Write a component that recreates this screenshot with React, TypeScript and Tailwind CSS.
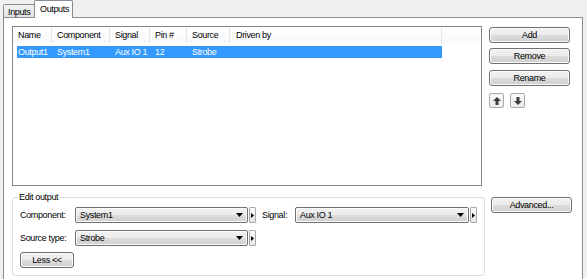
import React from "react";

const btnBg =
  "bg-[linear-gradient(#f2f2f2,#ebebeb_50%,#dddddd_51%,#cfcfcf)] shadow-[inset_0_0_0_1px_#fbfbfb]";

function Btn({
  children,
  className = "",
  w = "w-[81px]",
}: {
  children: React.ReactNode;
  className?: string;
  w?: string;
}) {
  return (
    <div
      className={`h-[16px] ${w} rounded-[3px] border border-[#707070] ${btnBg} flex items-center justify-center text-black ${className}`}
    >
      {children}
    </div>
  );
}

function ArrowBtn({ down = false }: { down?: boolean }) {
  return (
    <div className="h-[15px] w-[15px] rounded-[2px] border border-[#a9a9a9] bg-[linear-gradient(#fafafa,#ececec)] flex items-center justify-center">
      <svg width="8" height="8" viewBox="0 0 8 8" className={down ? "rotate-180" : ""}>
        <path d="M4 0 L8 4 H5.5 V8 H2.5 V4 H0 Z" fill="#3c3c3c" />
      </svg>
    </div>
  );
}

function Combo({ value, w }: { value: string; w: string }) {
  return (
    <div className="flex items-center">
      <div
        className={`${w} h-[16px] rounded-[2px] border border-[#707070] ${btnBg} flex items-center pl-[4px] pr-[4px]`}
      >
        <span className="flex-1">{value}</span>
        <svg width="7" height="4" viewBox="0 0 7 4">
          <path d="M0 0 H7 L3.5 4 Z" fill="#000" />
        </svg>
      </div>
      <div className="ml-[1px] w-[7px] h-[16px] rounded-[1px] border border-[#a9a9a9] bg-[linear-gradient(#fafafa,#e6e6e6)] flex items-center justify-center">
        <svg width="3" height="5" viewBox="0 0 3 5">
          <path d="M0 0 L3 2.5 L0 5 Z" fill="#000" />
        </svg>
      </div>
    </div>
  );
}

const cols = [
  { name: "Name", w: "w-[39px] pl-[5px]", rw: "w-[35px] pl-[1px]" },
  { name: "Component", w: "w-[58px] pl-[5px]", rw: "w-[58px] pl-[5px]" },
  { name: "Signal", w: "w-[40px] pl-[5px]", rw: "w-[40px] pl-[5px]" },
  { name: "Pin #", w: "w-[37px] pl-[5px]", rw: "w-[37px] pl-[5px]" },
  { name: "Source", w: "w-[43px] pl-[5px]", rw: "w-[43px] pl-[5px]" },
  { name: "Driven by", w: "w-[212px] pl-[6px]", rw: "w-[212px] pl-[6px]" },
];

const row = ["Output1", "System1", "Aux IO 1", "12", "Strobe", ""];

export default function App() {
  return (
    <div className="w-[587px] h-[279px] overflow-hidden bg-[#f0f0f0] text-[9px] tracking-[-0.35px] leading-[12px] text-black font-['Liberation_Sans',Arial,sans-serif]">
      {/* tabs */}
      <div className="flex items-end h-[17px] pl-[3px]">
        <div className="h-[13px] w-[32px] border border-b-0 border-[#898c95] rounded-t-[2px] bg-[linear-gradient(#f2f2f2,#e3e3e3)] pl-[4px] pt-[1px]">
          Inputs
        </div>
        <div className="relative z-10 -ml-[1px] -mb-[1px] h-[18px] w-[39px] border border-b-0 border-[#898c95] rounded-t-[2px] bg-white pl-[5px] pt-[2px]">
          Outputs
        </div>
      </div>
      {/* panel */}
      <div className="ml-[3px] w-[580px] h-[270px] border border-[#898c95] bg-white pt-[8px] pl-[8px]">
        <div className="flex">
          {/* list */}
          <div className="w-[470px] h-[160px] border border-[#828790] bg-white">
            <div className="flex h-[16px] bg-[linear-gradient(#ffffff,#f7f8fa)]">
              {cols.map((c) => (
                <div key={c.name} className={`${c.w} border-r border-[#e5e5e5] flex items-center`}>
                  {c.name}
                </div>
              ))}
              <div className="flex-1" />
            </div>
            <div className="mt-[3px] ml-[4px] flex h-[12px]">
              <div className="flex bg-[#3399ff] text-white">
                {cols.map((c, i) => (
                  <div key={c.name} className={`${c.rw} flex items-center`}>
                    {row[i]}
                  </div>
                ))}
              </div>
            </div>
          </div>
          {/* buttons */}
          <div className="ml-[7px] pt-[1px] flex flex-col gap-[5px]">
            <Btn>Add</Btn>
            <Btn>Remove</Btn>
            <Btn className="mt-[1px]">Rename</Btn>
            <div className="mt-[2px] flex gap-[6px]">
              <ArrowBtn />
              <ArrowBtn down />
            </div>
          </div>
        </div>
        <div className="flex mt-[5px]">
          <fieldset className="w-[471px] border border-[#d5dfe5] rounded-[3px] px-[7px] pb-[7px]">
            <legend className="-ml-[2px] px-[1px] leading-[12px]">Edit output</legend>
            <div className="pt-[4px] flex flex-col">
              <div className="flex items-center">
                <div className="w-[55px]">Component:</div>
                <Combo value="System1" w="w-[173px]" />
                <div className="ml-[6px] w-[33px]">Signal:</div>
                <Combo value="Aux IO 1" w="w-[174px]" />
              </div>
              <div className="flex items-center mt-[7px]">
                <div className="w-[55px]">Source type:</div>
                <Combo value="Strobe" w="w-[173px]" />
              </div>
              <div className="mt-[6px]">
                <Btn w="w-[54px]">Less &lt;&lt;</Btn>
              </div>
            </div>
          </fieldset>
          <div className="ml-[6px] mt-[6px]">
            <Btn>Advanced...</Btn>
          </div>
        </div>
      </div>
    </div>
  );
}
